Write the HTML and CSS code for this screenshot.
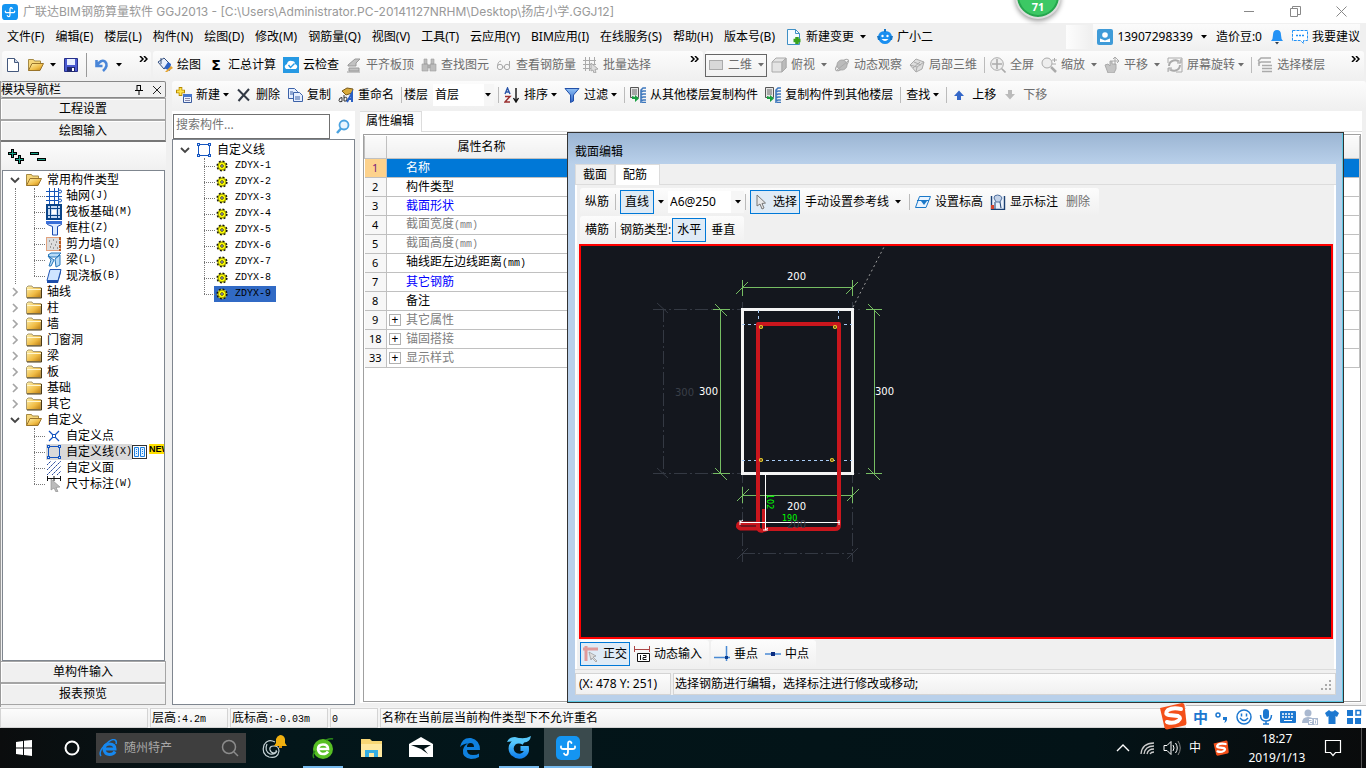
FILE: index.html
```html
<!DOCTYPE html>
<html lang="zh-CN">
<head>
<meta charset="utf-8">
<meta name="viewport" content="width=device-width, initial-scale=1">
<title>广联达BIM钢筋算量软件 GGJ2013</title>
<link rel="stylesheet" href="styles.css">
</head>
<body>
<svg class="defs" aria-hidden="true">
  <defs>
    <linearGradient id="gold" x1="0" y1="0" x2="1" y2="1"><stop offset="0" stop-color="#fff3b0"/><stop offset=".6" stop-color="#f0bc45"/><stop offset="1" stop-color="#b87a12"/></linearGradient>
    <linearGradient id="blue" x1="0" y1="0" x2="0" y2="1"><stop offset="0" stop-color="#8fc0f5"/><stop offset="1" stop-color="#2a5fc4"/></linearGradient>
    <linearGradient id="flame" x1="0" y1="0" x2="0" y2="1"><stop offset="0" stop-color="#5cd0ff"/><stop offset="1" stop-color="#1585ef"/></linearGradient>
    <symbol id="arrow" viewBox="0 0 6 4"><path d="M0 0h6L3 3.500z" fill="currentColor"/></symbol>
    <symbol id="chev" viewBox="0 0 9 6"><path d="M1 0l3 3-3 3M5 0l3 3-3 3" fill="none" stroke="#000" stroke-width="1.500"/></symbol>
    <symbol id="app" viewBox="0 0 24 24"><rect width="24" height="24" rx="5" fill="#1495f2"/><path d="M15.500 7q-1-2-2.500-1.500-1 .5-1 2V16q0 3-2 3-1.500 0-2-1.500M5 10.500q-.5 2.500 2.500 2.500h9q3 0 2.500-2.500" fill="none" stroke="#fff" stroke-width="1.800" stroke-linecap="round"/></symbol>
    <symbol id="folder" viewBox="0 0 16 16"><path d="M.5 13.500V3.500l1.500-1.500h4l1 1.500h8v10z" fill="url(#gold)" stroke="#a99a72"/><path d="M1 5.500h14" stroke="#fff6cf"/><path d="M15.500 4v10H1" fill="none" stroke="#4a3a14"/></symbol>
    <symbol id="openf" viewBox="0 0 16 16"><path d="M.5 13.500V2.500h5l1 1.500h6v2" fill="#f6d67a" stroke="#a58a45"/><path d="M.5 13.500L4 6.500h11.500l-3.500 7z" fill="url(#gold)" stroke="#9a742a"/></symbol>
    <symbol id="gear" viewBox="0 0 12 12"><circle cx="6" cy="6" r="4.800" fill="#ff0" stroke="#111" stroke-width="1.600" stroke-dasharray="1.900 1.870"/><circle cx="6" cy="6" r="3.900" fill="#ff0" stroke="#222" stroke-width=".5"/><circle cx="6" cy="6" r="1.300" fill="#dde" stroke="#111" stroke-width=".8"/></symbol>
    <symbol id="polybox" viewBox="0 0 16 16"><rect x="2.500" y="2.500" width="11" height="11" fill="none" stroke="#1555c0"/><path d="M1 1h3v3H1zM12 1h3v3h-3zM1 12h3v3H1zM12 12h3v3h-3z" fill="#1555c0"/><path d="M2 2h1v1H2zM13 2h1v1h-1zM2 13h1v1H2zM13 13h1v1h-1z" fill="#d8ecff"/></symbol>
    <symbol id="copyfl" viewBox="0 0 16 16"><path d="M.5.500h8v10h-8z" fill="#e6e6e6" stroke="#555"/><path d="M2 3h5M2 5h5M2 7h5" stroke="#666"/><path d="M16 1h-3l-2 2v13M11 5l2-1h3M11 8l2-1h3M11 11l2-1h3M11 14l2-1h3M12 15.500h4" fill="none" stroke="#3f78bd" stroke-width="1.600"/><path d="M2 9v3h3v3l4-3.500L5 8v2z" fill="#19a040"/></symbol>
    <symbol id="down" viewBox="0 0 10 10"><path d="M3 0h4v4h3L5 9.500 0 4h3z" fill="currentColor"/></symbol>
    <symbol id="caretd" viewBox="0 0 10 10"><path d="M1 3l4 4 4-4" fill="none" stroke="#444" stroke-width="1.800"/></symbol>
    <symbol id="caretr" viewBox="0 0 10 10"><path d="M3 1l4 4-4 4" fill="none" stroke="#a5a5a5" stroke-width="1.700"/></symbol>
    <symbol id="sogou" viewBox="0 0 28 28"><path d="M1 6L23 1q2 0 2.500 2l2 18q0 2-2 2.500L8 27.500q-2 0-2.500-2z" fill="#f4501a"/><path d="M22 7q-8-2-13 1-4 4 1 5l9 1q4 2 0 5-5 3-11 1" fill="none" stroke="#fff" stroke-width="4" stroke-linecap="round"/></symbol>
  </defs>
</svg>

<header class="titlebar">
  <svg class="i16"><use href="#app"/></svg>
  <h1>广联达BIM钢筋算量软件 GGJ2013 - [C:\Users\Administrator.PC-20141127NRHM\Desktop\扬店小学.GGJ12]</h1>
  <div class="winbtns">
    <button aria-label="最小化"><svg viewBox="0 0 11 11"><path d="M0 5.500h10"/></svg></button>
    <button aria-label="还原"><svg viewBox="0 0 11 11"><path d="M.5 2.500h7v8h-7zM2.500 2.500v-2h8v8h-3"/></svg></button>
    <button aria-label="关闭"><svg viewBox="0 0 11 11"><path d="M.5.500l10 10M10.500.500l-10 10"/></svg></button>
  </div>
  <div class="ball">71</div>
</header>

<nav class="menubar">
  <button>文件(F)</button><button>编辑(E)</button><button>楼层(L)</button><button>构件(N)</button><button>绘图(D)</button><button>修改(M)</button><button>钢筋量(Q)</button><button>视图(V)</button><button>工具(T)</button><button>云应用(Y)</button><button>BIM应用(I)</button><button>在线服务(S)</button><button>帮助(H)</button><button>版本号(B)</button>
  <button><svg class="i16" viewBox="0 0 16 16"><path d="M1.500.500h8l4 4v11h-12z" fill="#f4faff" stroke="#3f8fc4"/><path d="M9.500.500v4h4" fill="none" stroke="#3f8fc4"/><path d="M11 8v7M7.500 11.500h7" stroke="#39a31c" stroke-width="3.500"/></svg>新建变更<svg class="arr"><use href="#arrow"/></svg></button>
  <button><svg class="i16" viewBox="0 0 16 16"><path d="M1 9q0-7 7-7t7 7q-2 6-7 6T1 9z" fill="#1b8ff0"/><path d="M0 7h3v4H1zM13 7h3l-1 4h-2zM7 0h2v3H7z" fill="#1677c8"/><circle cx="5.500" cy="7" r="1.200" fill="#fff"/><circle cx="10.500" cy="7" r="1.200" fill="#fff"/><path d="M4.500 10q3.500 4 7 0z" fill="#fff"/></svg>广小二</button>
  <span class="ghost"></span>
  <div class="account">
    <button><svg class="i16" viewBox="0 0 16 16"><rect width="16" height="16" rx="2" fill="#3f9bd8"/><circle cx="8" cy="6" r="2.800" fill="#fff"/><path d="M3 13V9.500l5 2 5-2V13z" fill="#fff"/></svg>13907298339<svg class="arr"><use href="#arrow"/></svg></button>
    <button>造价豆:0</button>
    <button aria-label="通知"><svg class="bell" viewBox="0 0 12 16"><path d="M6 1q4 0 4 5 0 4 2 6H0q2-2 2-6 0-5 4-5z" fill="#2492f5"/><path d="M4 13h4l-2 2.500z" fill="#2b3a4a"/></svg></button>
    <button><svg class="i16" viewBox="0 0 16 16"><path d="M.5 1.500h15v10h-4v3l-3-3h-8z" fill="#fff" stroke="#2492f5" stroke-dasharray="3 1"/><path d="M4 6.500h2M7 6.500h2M10 6.500h2" stroke="#2492f5" stroke-width="1.500"/></svg>我要建议</button>
  </div>
</nav>

<div class="toolrow">
  <div class="bar filebar">
    <button aria-label="新建"><svg class="i16" viewBox="0 0 16 16"><path d="M2.500 1.500h7l4 4v9h-11z" fill="#fff" stroke="#44587c"/><path d="M9.500 1.500v4h4" fill="#c9d6ea" stroke="#44587c"/></svg></button>
    <button aria-label="打开"><svg class="i16"><use href="#openf"/></svg><svg class="arr"><use href="#arrow"/></svg></button>
    <button aria-label="保存"><svg class="i16" viewBox="0 0 16 16"><path d="M1.500 1.500h13v13h-13z" fill="#4a5ad0" stroke="#27308a"/><path d="M4 2h8v6H4z" fill="#e8efff"/><path d="M4 10h8v5H4z" fill="#20286e"/><path d="M9 11h2v3H9z" fill="#fff"/></svg></button>
    <i class="sep tall"></i>
    <button aria-label="撤销"><svg class="i16" viewBox="0 0 16 16"><path d="M2.500 3v6h6M3 8.500Q7 2 11 4.500q4 4-2 9.500" fill="none" stroke="#4a86d8" stroke-width="2.600"/></svg><svg class="arr"><use href="#arrow"/></svg></button>
    <svg class="more"><use href="#chev"/></svg>
  </div>
  <div class="bar drawbar">
    <button><svg class="i16" viewBox="0 0 16 16"><path d="M1 5l6-4 6 6-6 5z" fill="#e8eefb" stroke="#35507f"/><path d="M4 1v6" stroke="#35507f"/><path d="M7 11l4-6 3 2q-1 6-1 7z" fill="#2d62c4"/><path d="M8 15l6-6 2 2-6 4z" fill="#e6a32e"/></svg>绘图</button>
    <button><b class="sigma">Σ</b>汇总计算</button>
    <button><svg class="i16" viewBox="0 0 16 16"><rect width="16" height="16" fill="#2699e3"/><path d="M3 12q-3-3 1-5 1-4 5-3 3 0 3 3 4 2 1 5z" fill="#fff"/><path d="M5.500 8l2 2.500 4-4" fill="none" stroke="#2699e3" stroke-width="1.400"/></svg>云检查</button>
    <button disabled><svg class="i16" viewBox="0 0 16 16"><path d="M2 8l7-6h5l-4 4v3H2zM3 11h10v3H3z" fill="#c2c2c2" stroke="#999"/><path d="M1 15h13" stroke="#999"/></svg>平齐板顶</button>
    <button disabled><svg class="i16" viewBox="0 0 16 16"><path d="M3 2h3v5H3zM10 2h3v5h-3zM1 7h6v7H1zM9 7h6v7H9zM7 8h2v3H7z" fill="#bdbdbd" stroke="#a0a0a0" stroke-width=".6"/></svg>查找图元</button>
    <button disabled><svg class="i16" viewBox="0 0 16 16"><circle cx="4" cy="10" r="2.700"/><circle cx="11" cy="10" r="2.700"/><path d="M1.500 9Q2 4 5 4M13.500 10V4M7 10h2"/></svg>查看钢筋量</button>
    <button disabled><svg class="i16" viewBox="0 0 16 16"><path d="M0 3.500h13M0 7.500h13M0 11.500h8M2.500 0v14M6.500 0v14M11.500 0v8"/><path d="M8 6l7 6-3 .5 1 3-2 .5-1-3-2 1z" fill="#ddd"/></svg>批量选择</button>
    <svg class="more"><use href="#chev"/></svg>
  </div>
  <div class="bar viewbar">
    <button class="framed" disabled><svg class="i16" viewBox="0 0 16 16"><rect x="1.500" y="3.500" width="13" height="9" fill="#d8d8d8"/></svg>二维<svg class="arr"><use href="#arrow"/></svg></button>
    <button disabled><svg class="i16" viewBox="0 0 16 16"><path d="M1 5l4-4h10v10l-4 4H1z" fill="#e4e4e4"/><path d="M1 5h10v10M11 5l4-4" /><path d="M11 5l4-4v10l-4 4z" fill="#bbb"/></svg>俯视<svg class="arr"><use href="#arrow"/></svg></button>
    <button disabled><svg class="i16" viewBox="0 0 16 16"><ellipse cx="8" cy="8" rx="8" ry="3" transform="rotate(-40 8 8)"/><circle cx="8" cy="8" r="5" fill="#bbb"/><path d="M3 13L14 4"/></svg>动态观察</button>
    <button disabled><svg class="i16" viewBox="0 0 16 16"><path d="M1 8l6-6 8 3-2 7-6 3z" fill="#ddd"/><path d="M1 8l7 2 7-5M8 10l-1 5M5 5l7 3M4 11l7-6"/></svg>局部三维</button>
    <i class="sep"></i>
    <button disabled><svg class="i16" viewBox="0 0 16 16"><circle cx="7" cy="7" r="6.300" fill="#eee"/><path d="M7 2v10M2 7h10M11.500 11.500l4 4" stroke-width="1.600"/></svg>全屏</button>
    <button disabled><svg class="i16" viewBox="0 0 16 16"><circle cx="6" cy="6" r="5" fill="#eee"/><path d="M10 10l5 5" stroke-width="2.500"/><path d="M11 3h5M13.500 1v4M11 7h4"/></svg>缩放<svg class="arr"><use href="#arrow"/></svg></button>
    <button disabled><svg class="i16" viewBox="0 0 16 16"><path d="M1 8l3-1 2 2V4h2v3h4v5l-2 4H4z" fill="#c4c4c4"/><path d="M11 0v8M8 4h7M9 2l2-2 2 2M13 2l2 2-2 2"/></svg>平移<svg class="arr"><use href="#arrow"/></svg></button>
    <button disabled><svg class="i16" viewBox="0 0 16 16"><path d="M1 6V1h14v14H9" /><path d="M2 9a6 6 0 0 1 11-3M13 8a6 6 0 0 1-11 3" stroke-width="2"/><path d="M10 6h4V2M5 11H1v4" fill="#ccc"/></svg>屏幕旋转<svg class="arr near"><use href="#arrow"/></svg></button>
    <i class="sep"></i>
    <button disabled><svg class="i16" viewBox="0 0 16 16"><path d="M1 4l3-3h10M1 7l3-2h10M5 8.500h10M5 11.500h10M5 14.500h10M2 4v5" stroke-width="1.500"/></svg>选择楼层</button>
    <svg class="more"><use href="#chev"/></svg>
  </div>
</div>

<main class="work">
  <aside class="nav">
    <div class="navhead"><span>模块导航栏</span><button aria-label="固定"><svg viewBox="0 0 10 10"><path d="M3 0v5M6.500 0v5M3 .5h4M1 5.500h8M5 6v4" fill="none" stroke="#000"/></svg></button><button aria-label="关闭面板"><svg viewBox="0 0 10 10"><path d="M1 1l8 8M9 1L1 9" stroke="#222"/></svg></button></div>
    <button class="wide">工程设置</button>
    <button class="wide pressed">绘图输入</button>
    <div class="mini"><button aria-label="全部展开"><svg viewBox="0 0 18 16"><path d="M5.500 1v9M1 5.500h9M12.500 7v9M8 11.500h9" stroke="#000" stroke-width="3"/><path d="M5.500 2v7M2 5.500h7M12.500 8v7M9 11.500h7" stroke="#16a085"/></svg></button><button aria-label="全部折叠"><svg viewBox="0 0 18 16"><path d="M1 5.500h9M8 11.500h9" stroke="#000" stroke-width="3"/><path d="M2 5.500h7M9 11.500h7" stroke="#16a085"/></svg></button></div>
    <div class="treebox">
      <ul class="tree">
        <li><div class="node"><svg class="car"><use href="#caretd"/></svg><svg class="i16"><use href="#openf"/></svg>常用构件类型</div>
          <ul class="sub">
            <li><svg class="i16" viewBox="0 0 16 16"><path d="M0 3.500h16M0 8.500h16M0 12.500h16M3.500 0v16M8.500 0v16M12.500 0v16" stroke="#1555b8"/><circle cx="14" cy="3.500" r="1.500" fill="#fff" stroke="#1555b8"/><circle cx="14" cy="12.500" r="1.500" fill="#fff" stroke="#1555b8"/></svg>轴网<tt>(J)</tt></li>
            <li><svg class="i16" viewBox="0 0 16 16"><rect x="1" y="1" width="14" height="14" fill="#c8dcf4" stroke="#0a4488" stroke-width="2"/><path d="M4.500 2v12M11.500 2v12M2 4.500h12M2 11.500h12" stroke="#0a4488"/><path d="M6 6h4v4H6z" fill="#fff"/></svg>筏板基础<tt>(M)</tt></li>
            <li><svg class="i16" viewBox="0 0 16 16"><path d="M.5 1.500h15v3l-4 2v8.500h-5V6.500l-5-2z" fill="#dceaff" stroke="#1848b0"/><path d="M0 1h16v3H0z" fill="#3a6fd8"/></svg>框柱<tt>(Z)</tt></li>
            <li><svg class="i16" viewBox="0 0 16 16"><rect x=".5" y="1.500" width="14" height="13" fill="#ddd" stroke="#e2a27e"/><path d="M3 5h1M7 4h1M10 6h1M5 8h1M9 9h1M4 11h1M7 12h1M11 12h1" stroke="#555"/><path d="M14 1v14" stroke="#b75b22" stroke-width="2" stroke-dasharray="3 1"/></svg>剪力墙<tt>(Q)</tt></li>
            <li><svg class="i16" viewBox="0 0 16 16"><path d="M2 3l3-2h10l-4 4H4zM9 7l5-4v10l-4 2zM2 4l6 4-3 6H3l2-6z" fill="#b8dcf8" stroke="#2475b8"/></svg>梁<tt>(L)</tt></li>
            <li><svg class="i16" viewBox="0 0 16 16"><path d="M4 1.500h11l-3 11H1z" fill="#cfe4ff" stroke="#2257b4"/><path d="M1 12.500h11l3-11v3l-3 10.500H1z" fill="#1c4da8"/></svg>现浇板<tt>(B)</tt></li>
          </ul></li>
        <li><div class="node"><svg class="car"><use href="#caretr"/></svg><svg class="i16"><use href="#folder"/></svg>轴线</div></li>
        <li><div class="node"><svg class="car"><use href="#caretr"/></svg><svg class="i16"><use href="#folder"/></svg>柱</div></li>
        <li><div class="node"><svg class="car"><use href="#caretr"/></svg><svg class="i16"><use href="#folder"/></svg>墙</div></li>
        <li><div class="node"><svg class="car"><use href="#caretr"/></svg><svg class="i16"><use href="#folder"/></svg>门窗洞</div></li>
        <li><div class="node"><svg class="car"><use href="#caretr"/></svg><svg class="i16"><use href="#folder"/></svg>梁</div></li>
        <li><div class="node"><svg class="car"><use href="#caretr"/></svg><svg class="i16"><use href="#folder"/></svg>板</div></li>
        <li><div class="node"><svg class="car"><use href="#caretr"/></svg><svg class="i16"><use href="#folder"/></svg>基础</div></li>
        <li><div class="node"><svg class="car"><use href="#caretr"/></svg><svg class="i16"><use href="#folder"/></svg>其它</div></li>
        <li><div class="node"><svg class="car"><use href="#caretd"/></svg><svg class="i16"><use href="#openf"/></svg>自定义</div>
          <ul class="sub last">
            <li><svg class="i16" viewBox="0 0 16 16"><path d="M3 3l10 10M13 3L3 13" stroke="#1555c0" stroke-width="1.200"/><rect x="6.500" y="6.500" width="3" height="3" fill="#fff" stroke="#1555c0"/></svg>自定义点</li>
            <li><span class="hot"><svg class="i16"><use href="#polybox"/></svg>自定义线<tt>(X)</tt></span><svg class="i16" viewBox="0 0 16 16"><rect x=".5" y="1.500" width="14" height="13" fill="#fff" stroke="#333"/><path d="M2.500 3.500h4v9h-4zM8.500 3.500h4v9h-4z" fill="#e4f2ff" stroke="#1d7fe0"/><path d="M4.500 5v6M10.500 5v6" stroke="#1d7fe0" stroke-dasharray="1 1"/></svg><b class="new">NEW</b></li>
            <li><svg class="i16" viewBox="0 0 16 16"><path d="M1 5l4-4M1 10l9-9M1 15L15 1M6 15l9-9M11 15l4-4" stroke="#26489c" stroke-dasharray="2 .5"/></svg>自定义面</li>
            <li><svg class="i16" viewBox="0 0 16 16"><path d="M1.500 0v5M14.500 0v5M1 2.500h14M8 0v5" stroke="#111"/><path d="M5 3l9 8-4 .5 2 4-2 .5-2-4-3 2z" fill="#bbb" stroke="#888" stroke-width=".6"/></svg>尺寸标注<tt>(W)</tt></li>
          </ul></li>
      </ul>
    </div>
    <button class="wide">单构件输入</button>
    <button class="wide">报表预览</button>
  </aside>

  <section class="content">
    <div class="bar compbar">
      <button><svg class="i16" viewBox="0 0 16 16"><path d="M4.500 0v9M0 4.500h9" stroke="#b58800" stroke-width="3.600"/><path d="M4.500 1v7M1 4.500h7" stroke="#ffe34a" stroke-width="2"/><path d="M7.500 7.500h8v8h-8z" fill="#eaf2ff" stroke="#3c5b9c"/><path d="M7 7h9v3H7z" fill="#4676cf"/><path d="M9 11.500h5M9 13.500h5" stroke="#88a"/></svg>新建<svg class="arr near"><use href="#arrow"/></svg></button>
      <button><svg class="i16" viewBox="0 0 16 16"><path d="M2 2.500l11 11M13 2L2.500 14" stroke="#333a45" stroke-width="2"/></svg>删除</button>
      <button><svg class="i16" viewBox="0 0 16 16"><path d="M1.500 1.500h6l3 3v7h-9z" fill="#e5eeff" stroke="#3c62a8"/><path d="M6.500 5.500h6l3 3v6h-9z" fill="#e5eeff" stroke="#3c62a8"/><path d="M3 5h3M3 7h3M8 10h5M8 12h5" stroke="#3c62a8"/></svg>复制</button>
      <button><svg class="i16" viewBox="0 0 16 16"><path d="M4 4l5-3 6 1-1 4-6 2z" fill="#d9aa3a" stroke="#78591c"/><path d="M1 13.500q0-3 3-3v4q-3 1-3-1M6 8v6q3 1 3-2t-3-1" fill="none" stroke="#333"/><path d="M9 15l5-9v9M11 12h3" fill="none" stroke="#2a5fc4" stroke-width="2"/></svg>重命名</button>
      <i class="sep"></i>
      <label for="floor">楼层</label>
      <span class="combo floor"><select id="floor"><option>首层</option></select><svg class="arr"><use href="#arrow"/></svg></span>
      <i class="sep"></i>
      <button><svg class="i16" viewBox="0 0 16 16"><path d="M1 7l2.500-6L6 7M2 5h3" fill="none" stroke="#2a55a8" stroke-width="1.400"/><path d="M1 9.500h5l-5 5.500h5" fill="none" stroke="#9a2f2f" stroke-width="1.500"/><path d="M12 1v13M9.500 11l2.500 4 2.500-4" fill="none" stroke="#111" stroke-width="1.400"/></svg>排序<svg class="arr near"><use href="#arrow"/></svg></button>
      <button><svg class="i16" viewBox="0 0 16 16"><path d="M1 1.500h14L9.500 8v6l-3 1.500V8z" fill="url(#blue)" stroke="#2250a8"/></svg>过滤<svg class="arr near"><use href="#arrow"/></svg></button>
      <i class="sep"></i>
      <button><svg class="i16"><use href="#copyfl"/></svg>从其他楼层复制构件</button>
      <button><svg class="i16"><use href="#copyfl"/></svg>复制构件到其他楼层</button>
      <i class="sep"></i>
      <button>查找<svg class="arr near"><use href="#arrow"/></svg></button>
      <i class="sep"></i>
      <button class="up"><svg class="i10"><use href="#down"/></svg>上移</button>
      <button class="dn" disabled><svg class="i10"><use href="#down"/></svg>下移</button>
    </div>

    <div class="panes">
      <section class="complist">
        <div class="search"><input type="text" placeholder="搜索构件..." aria-label="搜索构件"><button aria-label="搜索"><svg viewBox="0 0 16 16"><circle cx="9" cy="6" r="4.500" fill="#eaf6ff" stroke="#4ba3e0" stroke-width="1.800"/><path d="M6 9.500L2 14" stroke="#4ba3e0" stroke-width="2.500"/></svg></button></div>
        <div class="treebox">
          <ul class="tree">
            <li><div class="node"><svg class="car"><use href="#caretd"/></svg><svg class="i16"><use href="#polybox"/></svg>自定义线</div>
              <ul class="sub">
                <li><svg class="i12"><use href="#gear"/></svg><tt>ZDYX-1</tt></li><li><svg class="i12"><use href="#gear"/></svg><tt>ZDYX-2</tt></li><li><svg class="i12"><use href="#gear"/></svg><tt>ZDYX-3</tt></li><li><svg class="i12"><use href="#gear"/></svg><tt>ZDYX-4</tt></li><li><svg class="i12"><use href="#gear"/></svg><tt>ZDYX-5</tt></li><li><svg class="i12"><use href="#gear"/></svg><tt>ZDYX-6</tt></li><li><svg class="i12"><use href="#gear"/></svg><tt>ZDYX-7</tt></li><li><svg class="i12"><use href="#gear"/></svg><tt>ZDYX-8</tt></li><li class="sel"><svg class="i12"><use href="#gear"/></svg><tt>ZDYX-9</tt></li>
              </ul></li>
          </ul>
        </div>
      </section>

      <section class="props">
        <div class="tabs"><button class="on">属性编辑</button></div>
        <div class="sheet">
          <table>
            <thead><tr><th class="num"></th><th class="name">属性名称</th><th></th></tr></thead>
            <tbody>
              <tr class="cur"><td>1</td><td>名称</td><td></td></tr>
              <tr><td>2</td><td>构件类型</td><td></td></tr>
              <tr class="link"><td>3</td><td>截面形状</td><td></td></tr>
              <tr class="dim"><td>4</td><td>截面宽度<tt>(mm)</tt></td><td></td></tr>
              <tr class="dim"><td>5</td><td>截面高度<tt>(mm)</tt></td><td></td></tr>
              <tr><td>6</td><td>轴线距左边线距离<tt>(mm)</tt></td><td></td></tr>
              <tr class="link"><td>7</td><td>其它钢筋</td><td></td></tr>
              <tr><td>8</td><td>备注</td><td></td></tr>
              <tr class="dim grp"><td>9</td><td><button aria-label="展开">+</button>其它属性</td><td></td></tr>
              <tr class="dim grp"><td>18</td><td><button aria-label="展开">+</button>锚固搭接</td><td></td></tr>
              <tr class="dim grp"><td>33</td><td><button aria-label="展开">+</button>显示样式</td><td></td></tr>
            </tbody>
          </table>
        </div>
      </section>
    </div>
  </section>

  <section class="dialog" role="dialog" aria-label="截面编辑">
    <h2>截面编辑</h2>
    <div class="dbody">
      <div class="tabs"><button>截面</button><button class="on">配筋</button></div>
      <div class="dpanel">
        <div class="bar">
          <span class="lbl">纵筋</span><i class="sep"></i>
          <button class="checked">直线</button><svg class="arr line"><use href="#arrow"/></svg>
          <span class="combo rebar"><select aria-label="纵筋规格"><option>A6@250</option></select><svg class="arr"><use href="#arrow"/></svg></span>
          <i class="sep"></i>
          <button class="checked icon"><svg class="i16" viewBox="0 0 16 16"><path d="M4 1v11l3-2 2 5 2-1-2-4.500 3.500-.5z" fill="#e8e8e8" stroke="#777"/></svg>选择</button>
          <button>手动设置参考线<svg class="arr"><use href="#arrow"/></svg></button>
          <i class="sep"></i>
          <button class="icon"><svg class="i16" viewBox="0 0 16 16"><path d="M4.500 2.500h11L11 13.500H.5z" fill="#eaf4ff" stroke="#1a78c8"/><path d="M2 6.500h12" stroke="#1a78c8"/><path d="M6 7h6l-3 4z" fill="#1a78c8"/></svg>设置标高</button>
          <button class="icon"><svg class="i16" viewBox="0 0 16 16"><path d="M1.500 2v13.500h13V2" fill="#e9f0fa" stroke="#1b3f70" stroke-width="1.400"/><path d="M4 4q0-3 3.500-3T12 4l-2 4H6z" fill="#c3d2e8" stroke="#51709e"/><path d="M5 8v7M10 8l1 6" stroke="#1b3f70"/><path d="M1 11h3v4H1z" fill="#d8442c"/></svg>显示标注</button>
          <button disabled>删除</button>
        </div>
        <div class="bar">
          <span class="lbl">横筋</span><i class="sep"></i><span>钢筋类型:</span>
          <button class="checked">水平</button><button>垂直</button>
        </div>
        <div class="canvas">
          <svg role="img" aria-label="截面图"><g transform="translate(-581 -246)" fill="none">
            <g stroke="#343943" stroke-dasharray="13 3 2 3"><path d="M653 309.500h207M653 473.500h207M663.500 309v164M742.500 302v260M852.500 302v260M742 553.500h110"/><path d="M657 303l11 10M657 468l11 10M737 559l11-11M847 559l11-11" stroke-dasharray="none"/></g>
            <path d="M853 307l31-60" stroke="#9b9b9b" stroke-dasharray="2 3"/>
            <g stroke="#76bd63"><path d="M742.500 280v16M852.500 280v16M742 287.500h110M736 294l12-12M846 294l12-12M720.500 309v165M713 309.500h17M713 473.500h17M715 304l12 12M715 468l12 12M874.500 309v165M866 309.500h16M866 473.500h16M868 304l12 12M868 468l12 12M742.500 487v16M852.500 487v16M742 495.500h110M737 501l12-12M847 501l12-12"/></g>
            <rect x="742.500" y="309.500" width="110" height="164" stroke="#f4f4f4" stroke-width="3"/>
            <path d="M742 324.500h110M758.500 310v14M838.500 310v14M742 460.500h110" stroke="#a8cbf5" stroke-dasharray="3 3"/>
            <path d="M764 530v-21M758 523v5q2 4 6 2l3-1h68q4 0 4-4v-3M760 523.500h-20q-2 0-2 3 1 2 4 2h16" stroke="#ca161d" stroke-width="4" stroke-linejoin="round"/>
            <path d="M758 524V324h81v200" stroke="#ca161d" stroke-width="4" stroke-linejoin="round"/>
            <path d="M765.500 474v56M740 522.500h100M763 474h5M763 530h5M740 520v5M839 520v5M765 530l3-2M740 522l3-2" stroke="#fff"/>
            <g stroke="#ead62b" stroke-width="1.200" fill="#5c2813"><circle cx="761" cy="327" r="1.500"/><circle cx="835" cy="327" r="1.500"/><circle cx="761" cy="460" r="1.500"/><circle cx="832" cy="460" r="1.500"/></g>
            <g class="dims"><text x="787" y="280">200</text><text x="699" y="395">300</text><text x="875" y="395">300</text><text x="787" y="510">200</text><text class="faint" x="675" y="396">300</text><text class="faint" x="787" y="528">200</text><text class="grn" x="782" y="521">190</text><text class="grn" transform="translate(767 494) rotate(90)">102</text></g>
          </g></svg>
        </div>
        <div class="snap">
          <div class="bar"><button class="checked icon"><svg class="i16" viewBox="0 0 16 16"><path d="M0 3h15M3 0v15" stroke="#e09a9a" stroke-width="3"/><path d="M6 6l7 4-3 1 4 4-1 1-4-4-1 2z" fill="#ddd" stroke="#888" stroke-width=".6"/></svg>正交</button><button class="icon"><svg class="i16" viewBox="0 0 16 16"><path d="M.5 0v6M15.500 0v6M0 3.500h16" stroke="#a44"/><path d="M3.500 7.500h12v8h-12z" fill="#fff" stroke="#111"/><path d="M6.500 9v5M9 9.500h3v2H9v2h3.500" fill="none" stroke="#111"/></svg>动态输入</button></div>
          <div class="bar"><button class="icon"><svg class="i16" viewBox="0 0 16 16"><path d="M0 11.500h16M12.500 0v15" stroke="#4a8ad4" stroke-width="1.500"/><path d="M11 10h3v3h-3z" fill="#0a3c90"/></svg>垂点</button><button class="icon"><svg class="i16" viewBox="0 0 16 16"><path d="M0 8h16" stroke="#4a8ad4" stroke-width="1.500"/><path d="M6 6h4v4H6z" fill="#0a2c80"/></svg>中点</button></div>
        </div>
      </div>
      <div class="dstatus"><span class="xy">(X: 478 Y: 251)</span><span class="grow">选择钢筋进行编辑，选择标注进行修改或移动;<svg viewBox="0 0 12 12"><path d="M8 0h2v2H8zM4 4h2v2H4zM8 4h2v2H8zM0 8h2v2H0zM4 8h2v2H4zM8 8h2v2H8z" fill="#aaa"/></svg></span></div>
    </div>
  </section>
</main>

<footer class="status"><span class="s1"></span><span class="s2">层高<tt>:4.2m</tt></span><span class="s3">底标高<tt>:-0.03m</tt></span><span class="s4"><tt>0</tt></span><span class="grow">名称在当前层当前构件类型下不允许重名</span>
  <div class="ime"><svg class="logo"><use href="#sogou"/></svg><b>中</b>
    <svg viewBox="0 0 16 16"><circle cx="4" cy="6" r="2" fill="none" stroke="#1d78d0" stroke-width="1.500"/><path d="M9 8h4v3q-1 3-3 3 1-1 1-3H9z" fill="#1d78d0"/></svg>
    <svg viewBox="0 0 16 16"><circle cx="8" cy="8" r="7" fill="none" stroke="#1d78d0" stroke-width="1.500"/><path d="M5.500 4.500v3M10.500 4.500v3M4 9q4 5 8 0" fill="none" stroke="#1d78d0" stroke-width="1.500"/></svg>
    <svg viewBox="0 0 16 16"><rect x="5" y="0" width="6" height="10" rx="3" fill="#1d78d0"/><path d="M2.500 6q0 6 5.500 6t5.500-6M8 12v3M5 15h6" fill="none" stroke="#1d78d0" stroke-width="1.500"/></svg>
    <svg viewBox="0 0 16 16"><rect y="2" width="16" height="12" rx="1" fill="#1d78d0"/><path d="M2 5h12M2 8h12" stroke="#fff" stroke-width="1.500" stroke-dasharray="2 1"/><path d="M4 11.500h8" stroke="#fff"/></svg>
    <svg viewBox="0 0 16 16"><circle cx="6" cy="4" r="3.500" fill="#a9b8cf"/><path d="M0 14q0-6 6-6 4 0 5 2v4z" fill="#a9b8cf"/><path d="M6 9h10v7H6z" fill="#a9b8cf"/><path d="M7 10.500h3v2H7.500v2H10M12.500 10v5h2v-4h-2" stroke="#fff" fill="none"/></svg>
    <svg viewBox="0 0 16 16"><path d="M1 4l4-3q3 3 6 0l4 3-2 4-1.500-1v8h-7V7L3 8z" fill="#1d78d0"/></svg>
    <svg viewBox="0 0 16 16"><path d="M1 1h6v6H1zM1 9h6v6H1zM9 9h6v6H9z" fill="#1d78d0"/><rect x="10" y="1.500" width="4.500" height="4.500" fill="none" stroke="#1d78d0" stroke-width="1.500"/></svg>
  </div>
</footer>

<nav class="taskbar" aria-label="任务栏">
  <button class="t" aria-label="开始"><svg class="i16" viewBox="0 0 16 16"><path d="M0 2l7-1v6.500H0zM8 .8L16 0v7.500H8zM0 8.500h7V15l-7-1zM8 8.500h8V16l-8-1z" fill="#fff"/></svg></button>
  <button class="t" aria-label="Cortana"><svg class="i16" viewBox="0 0 16 16"><circle cx="8" cy="8" r="6.500" fill="none" stroke="#fff" stroke-width="2"/></svg></button>
  <div class="tsearch"><svg class="i18" viewBox="0 0 18 18"><path d="M5 10h11q0-5-5.500-5Q5 5 5 10.500q1 5 5.500 5 4 0 5.500-3" fill="none" stroke="#1688f0" stroke-width="3"/><path d="M2 17Q-1 13 6 6t10-5q2 1 1 4" fill="none" stroke="#1688f0" stroke-width="1.500"/></svg><input type="text" value="随州特产" aria-label="搜索"><svg class="i18" viewBox="0 0 18 18"><circle cx="8" cy="8" r="6.500" fill="none" stroke="#8c8c8c" stroke-width="1.500"/><path d="M13 13l4 4" stroke="#8c8c8c" stroke-width="1.500"/></svg></div>
  <div class="apps">
    <button class="t" aria-label="助手"><svg class="i28" viewBox="0 0 28 28"><path d="M15 8Q8 4 4 11q-3 9 5 12 9 2 10-6 0-5-5-5-5 0-4 4 1 3 4 3 3-1 2-3M7 10q-3 7 3 10 5 1 7-3" fill="none" stroke="#c6d3d6" stroke-width="1.200"/><path d="M14 12l2-3V5q1-3 4-4 4 0 5 4v4l2 3z" fill="#f0b010"/><path d="M19 12h3v2h-3z" fill="#e09000"/></svg></button>
    <button class="t run" aria-label="浏览器"><svg class="i22" viewBox="0 0 22 22"><circle cx="11" cy="12" r="10" fill="#58bf24"/><path d="M6 12h10q0-4.500-5-4.500T6 12.500Q7 17 11 17q3.500 0 5-2.500" fill="none" stroke="#fff" stroke-width="2.600"/><path d="M2 21Q0 18 3 14M14 3q5-2 7-1" fill="none" stroke="#2b8a19" stroke-width="1.500"/></svg></button>
    <button class="t" aria-label="文件资源管理器"><svg class="i22" viewBox="0 0 22 22"><path d="M0 2h9l2 2h10v16H0z" fill="#f8d775"/><path d="M0 7h21v13H0z" fill="#ffe9a0"/><path d="M4 20v-7h13v7h-4v-4H8v4z" fill="#35aee2"/></svg></button>
    <button class="t" aria-label="邮件"><svg class="i24" viewBox="0 0 24 24"><path d="M0 8l12-7 12 7v13H0z" fill="#fff"/><path d="M2 9h20l-7 4 4 5-7-5z" fill="#031317"/></svg></button>
    <button class="t" aria-label="Edge"><svg class="i22" viewBox="0 0 22 22"><path d="M1 10Q3 0 12 1q9 2 9 12H8q0 5 6 5 4 0 6-1.500V20q-3 2-8 2Q3 21 4 13 5 8 9 6.500 4 6.500 1 10zM8 10h7q0-4-3.500-4T8 10z" fill="#0f80de" fill-rule="evenodd"/></svg></button>
    <button class="t run" aria-label="广联达G"><svg class="i24" viewBox="0 0 24 24"><path d="M17 6.500Q11 3 6.500 7 2 12 6 17.500q5 4.500 10.500 1.500 3.500-2.500 3-6.500h-6" fill="none" stroke="url(#flame)" stroke-width="5"/><path d="M24 0q-1 6-7 6.500L10 6Q4 5 0 6 2 1 8 1q9 3 16-1z" fill="#58c8fb"/></svg></button>
    <button class="t run act" aria-label="广联达BIM"><svg class="i24"><use href="#app"/></svg></button>
  </div>
  <div class="tray">
    <svg class="i16" viewBox="0 0 16 16"><path d="M2 11l6-6 6 6" fill="none" stroke="#fff" stroke-width="1.400"/></svg>
    <svg class="i16" viewBox="0 0 16 16"><path d="M2 14Q3 3 15 3M5 14q1-8 10-8M8 14q1-5 7-5M11 14q1-2 4-2" fill="none" stroke="#ccc" stroke-width="1.300"/></svg>
    <svg class="i18" viewBox="0 0 18 18"><path d="M1 6.500h3l4-4v13l-4-4H1z" fill="none" stroke="#fff"/><path d="M10 6q2 3 0 6M12.500 4q3.500 5 0 10" fill="none" stroke="#fff"/><path d="M15 2q4.500 7 0 14" fill="none" stroke="#888"/></svg>
    <span>中</span><svg class="i16"><use href="#sogou"/></svg>
    <time>18:27<br>2019/1/13</time>
    <svg class="i18" viewBox="0 0 18 18"><path d="M1.500 1.500h15v12h-5l-2.500 3-2.500-3h-5z" fill="none" stroke="#fff" stroke-width="1.200"/></svg>
    <i class="peek"></i>
  </div>
</nav>
</body>
</html>
```
FILE: styles.css
```css
* { box-sizing: border-box; }
body {
  margin: 0; height: 100vh; overflow: hidden; display: flex; flex-direction: column;
  background: #f0f0f0; color: #000;
  font: 12px/16px "Noto Sans", "Noto Sans CJK SC", sans-serif;
}
button, input, select { font: inherit; color: inherit; border: 0; background: none; padding: 0; margin: 0; border-radius: 0; }
button { display: inline-flex; align-items: center; white-space: nowrap; }
svg { display: block; flex: none; }
ul { list-style: none; margin: 0; padding: 0; }
h1, h2 { margin: 0; font-weight: 400; font-size: 12px; }
tt { font: 10px/16px "Liberation Mono", monospace; }
.defs { position: absolute; width: 0; height: 0; }
.i10 { width: 10px; height: 10px; }
.i12 { width: 12px; height: 12px; }
.i16 { width: 16px; height: 16px; }
.i18 { width: 18px; height: 18px; }
.i22 { width: 22px; height: 22px; }
.i24 { width: 24px; height: 24px; }
.i28 { width: 28px; height: 28px; }
.arr { width: 6px; height: 4px; margin-left: 2px; }
.arr.near { margin-left: -1px; }
.grow { flex: 1; }

.titlebar { position: relative; flex: none; height: 23px; display: flex; align-items: center; gap: 5px; padding-left: 2px; background: #fff; color: #999; }
.titlebar h1 { flex: 1; white-space: nowrap; font-family: Inter, "Noto Sans CJK SC", sans-serif; }
.winbtns { display: flex; }
.winbtns button { width: 46px; height: 22px; justify-content: center; padding-right: 4px; }
.winbtns svg { width: 11px; height: 11px; fill: none; stroke: #888; }
.ball { position: absolute; z-index: 5; right: 305px; top: -27px; width: 46px; height: 46px; border-radius: 50%; border: 2px solid #ddd; background: #3cc864; box-shadow: inset 0 0 0 2px #25a54d, 0 2px 5px #0006; color: #fff; font-weight: 700; font-size: 11px; line-height: 16px; text-align: center; padding-top: 24px; }

.menubar { flex: none; height: 28px; display: flex; align-items: center; padding: 0 6px 0 7px; gap: 11px; }
.menubar button { gap: 4px; }
.ghost { flex: none; width: 24px; height: 24px; margin-left: auto; background: linear-gradient(90deg, #fdfdfd, #f0f0f0); }
.account { display: flex; align-items: center; gap: 9px; height: 26px; padding-left: 4px; margin-left: -8px; background: linear-gradient(#fbfbfb, #f0f0f0); }
.account .arr { margin-left: 4px; }
.bell { width: 12px; height: 16px; }

.toolrow { flex: none; height: 28px; display: flex; gap: 2px; margin: 0 2px; }
.bar { display: flex; align-items: center; gap: 8px; height: 28px; padding: 0 4px; background: linear-gradient(#fcfcfc, #f0f0f0); border-radius: 3px; }
.bar button { gap: 4px; }
.bar button:disabled { color: #6d6d6d; }
.toolrow button:disabled .i16 { fill: none; stroke: #aaa; }
.sep { width: 1px; height: 16px; background: #bbb; flex: none; }
.sep.tall { height: 24px; background: #999; }
.more { width: 9px; height: 6px; margin: 0 0 12px auto; }
.filebar { flex: 0 0 149px; gap: 7px; padding: 0 3px; }
.drawbar { flex: 0 0 550px; gap: 7px; }
.viewbar { flex: 1; gap: 7px; padding: 0 4px 0 0; }
.viewbar .sep { margin: 0 -2px 0 0; }
.viewbar .framed { border: 1px solid #666; height: 23px; padding: 0 2px; margin-right: -3px; }
.sigma { width: 16px; font: bold 14px/16px "DejaVu Sans", sans-serif; text-align: center; }

.work { position: relative; flex: 1; min-height: 0; display: flex; gap: 6px; padding-top: 2px; }
.nav { flex: 0 0 166px; min-width: 0; display: flex; flex-direction: column; border-left: 1px solid #999; padding-bottom: 2px; }
.navhead { display: flex; align-items: center; height: 17px; border: 1px solid #888; border-left: 0; border-radius: 2px; gap: 8px; padding-right: 3px; }
.navhead span { flex: 1; }
.navhead svg { width: 10px; height: 10px; }
.wide { flex: none; height: 22px; justify-content: center; border: 1px solid #a5a5a5; border-width: 1px 1px 1px 0; background: #f0f0f0; box-shadow: inset 1px 1px #fff; }
.wide.pressed { border-bottom: 2px solid #777; }
.mini { height: 28px; display: flex; align-items: center; gap: 4px; padding-left: 6px; background: linear-gradient(#fcfcfc, #f0f0f0); }
.mini svg { width: 18px; height: 16px; }
.treebox { flex: 1; min-height: 0; background: #fff; border: 1px solid #7f868f; overflow: hidden; }
.nav .treebox { margin: 0 1px; padding-top: 1px; }
.node { height: 16px; display: flex; align-items: center; gap: 5px; padding-left: 7px; white-space: nowrap; }
.car { width: 10px; height: 10px; }
.node .car { margin-right: 1px; }
.sub { position: relative; padding-left: 31px; }
.sub::before { content: ""; position: absolute; left: 31px; top: 0; bottom: 8px; border-left: 1px dotted #777; }
.nav .sub::after { content: ""; position: absolute; left: 12px; top: 0; bottom: 0; border-left: 1px dotted #777; }
.nav .sub.last::after { display: none; }
.sub li { height: 16px; display: flex; align-items: center; white-space: nowrap; }
.sub li::before { content: ""; flex: none; width: 11px; border-top: 1px dotted #777; margin-right: 1px; }
.nav .sub .i16 { margin-right: 4px; }
.hot { display: flex; background: #d9d9d9; }
.hot + .i16.i16 { margin-right: 0; }
.new { font: bold 9px/10px "Liberation Sans", sans-serif; background: #ffe000; margin: 0 0 6px 1px; }

.content { flex: 1; min-width: 0; display: flex; flex-direction: column; }
.compbar { height: 28px; flex: none; gap: 7px; }
.compbar .sep + label { margin-left: -5px; }
.combo { position: relative; display: flex; height: 22px; background: linear-gradient(90deg, #fff 83%, #f6f6f6 0); }
.combo select { appearance: none; width: 100%; padding-left: 2px; outline: 0; }
.combo .arr { position: absolute; right: 3px; top: 9px; pointer-events: none; }
.floor { width: 61px; margin: 0 -3px 0 -2px; }
.compbar .sep + button { margin-left: -2px; }
.up .i10, .dn .i10 { margin: 0 4px 0 2px; }
.up .i10 { color: #3467c8; transform: rotate(180deg); }
.dn .i10 { color: #bbb; }
.panes { flex: 1; min-height: 0; display: flex; gap: 5px; padding: 2px 4px 0 0; }
.complist { flex: 0 0 183px; display: flex; flex-direction: column; background: #fff; margin-bottom: 2px; }
.search { display: flex; align-items: center; height: 28px; padding: 3px 0 0 1px; }
.search input { width: 157px; height: 25px; border: 1px solid #707070; padding: 0 2px 4px; background: #fff; }
.search input::placeholder { color: #757575; }
.search button { width: 24px; justify-content: center; margin-left: auto; }
.search svg { width: 16px; height: 16px; }
.complist .treebox { padding-top: 2px; }
.complist .tree tt { padding-left: 7px; }
.complist .sub li.sel { background: linear-gradient(90deg, #fff 10px, #316ac5 10px); width: 72px; }

.props { flex: 1; min-width: 0; display: flex; flex-direction: column; background: #fff; margin-bottom: 4px; }
.tabs { display: flex; background: #f0f0f0; height: 21px; align-items: flex-end; border-bottom: 1px solid #dcdcdc; }
.tabs button { height: 20px; padding: 0 7px; border: 1px solid #dcdcdc; border-bottom: 0; }
.tabs .on { background: #fff; height: 21px; margin-bottom: -1px; }
.props .tabs { background: #fff; flex: none; }
.props .tabs .on { background: linear-gradient(#fafafa, #fff); padding: 0 7px 2px 6px; border-left: 0; }
.sheet { flex: 1; margin: 2px 1px 1px 3px; border: 1px solid #a0a0a0; overflow: hidden; }
table { width: 100%; border-collapse: collapse; table-layout: fixed; margin-top: 1px; }
th, td { height: 19px; padding: 0; border: 1px solid #c0c0c0; border-top: 0; font-weight: 400; line-height: 16px; }
th { height: 22px; background: linear-gradient(#fbfbfb, #efefef); }
.num { width: 22px; }
.name { width: 190px; }
td:first-child { text-align: center; background: #f7f7f7; font-size: 11px; border-left: 0; }
td:nth-child(2) { padding-left: 19px; white-space: nowrap; }
.cur td { background: #0078d7; color: #fff; }
.cur td:first-child { background: #fdd28c; color: #7a1a7a; }
.link td:nth-child(2) { color: #00f; }
.dim td:nth-child(2) { color: #808080; }
.grp td:nth-child(2) { padding-left: 2px; }
.grp button { width: 12px; height: 12px; margin: 0 5px 0 0; border: 1px solid #b0b0b0; color: #000; justify-content: center; vertical-align: middle; line-height: 10px; }

.dialog { position: absolute; z-index: 2; left: 567px; right: 22px; top: 53px; bottom: 4px; display: flex; flex-direction: column; padding: 0 7px 7px; background: linear-gradient(#9ab4d2, #b9d0ea 32px) no-repeat #b9d0ea; background-origin: border-box; border: 1px solid #333; box-shadow: inset -1px -1px #5cc8e4; }
.dialog h2 { height: 31px; padding-top: 11px; flex: none; }
.dbody { flex: 1; min-height: 0; display: flex; flex-direction: column; background: #f0f0f0; }
.dialog .tabs button { padding: 0 7px; }
.dialog .tabs .on { padding: 0 12px 0 7px; }
.dpanel { flex: 1; min-height: 0; display: flex; flex-direction: column; padding: 3px 3px 1px 5px; border-bottom: 1px solid #dcdcdc; box-shadow: inset 2px 0 #fff, inset -2px 0 #fff; }
.dpanel .bar { flex: none; align-self: flex-start; gap: 4px; padding: 0 5px; }
.dpanel .bar .lbl { margin-right: 2px; }
.dpanel .bar button { padding: 0 4px; height: 24px; }
.dpanel .bar .icon { padding: 0 3px; }
.dpanel .bar .checked { background: #dfebf6; border: 1px solid #0078d7; }
.dpanel .bar .checked.icon { padding: 0 2px; }
.dpanel .bar > * + button { margin-left: -3px; }
.dpanel .bar > .sep + button { margin-left: 0; }
.dpanel .bar > .sep + .icon { margin-left: -2px; }
.dpanel .bar > .sep + .checked { margin-left: 0; }
.arr.line { margin-left: 0; }
.rebar { width: 76px; }
.rebar + .sep { margin-left: -3px; }
.canvas { flex: 1; min-height: 0; margin-left: -1px; border: 2px solid #f00; background: #14171e; }
.canvas svg { width: 100%; height: 100%; }
.dims { fill: #fff; font-family: "DejaVu Sans", sans-serif; font-size: 10px; }
.dims .faint { fill: #3a3f48; }
.dims .grn { fill: #0f0; font-size: 8px; }
.snap { flex: none; display: flex; gap: 2px; height: 29px; padding-top: 1px; }
.snap .bar { padding: 0 4px 0 0; }
.dstatus { flex: none; display: flex; gap: 2px; height: 25px; padding-top: 3px; }
.dstatus span { border: 1px solid #d4d4d4; background: linear-gradient(#fcfcfc, #f0f0f0); padding: 2px 3px; display: flex; justify-content: space-between; white-space: nowrap; }
.dstatus .xy { width: 96px; }
.dstatus .grow { padding: 2px 2px 2px 1px; }
.dstatus svg { width: 12px; height: 12px; align-self: flex-end; }

.status { position: relative; flex: none; height: 21px; display: flex; gap: 2px; padding-top: 1px; background: #f4f4f4; }
.status > span { border: 1px solid #d4d4d4; background: linear-gradient(#fcfcfc, #f0f0f0); padding: 1px; white-space: nowrap; }
.s1 { width: 148px; }
.s2 { width: 78px; }
.s3 { width: 98px; }
.s4 { width: 48px; }
.ime { position: absolute; z-index: 3; right: 0; bottom: 0; width: 180px; height: 23px; display: flex; align-items: center; gap: 6px; padding: 0 4px 0 7px; background: #fff; border-top: 1px solid #bbb; }
.ime svg { width: 16px; height: 16px; }
.ime .logo { width: 28px; height: 28px; position: absolute; left: -27px; top: -4px; }
.ime b { font-size: 15px; line-height: 18px; color: #1d78d0; }

.taskbar { flex: none; height: 40px; display: flex; align-items: center; background: linear-gradient(90deg, #0b0d0e, #03161a 20%, #031317 80%, #0a0b0c); color: #fff; }
.t { width: 48px; height: 40px; justify-content: center; }
.tsearch { width: 150px; height: 30px; display: flex; align-items: center; gap: 7px; padding: 0 7px 0 3px; background: #3e3e3e; }
.tsearch input { flex: 1; min-width: 0; color: #a8a8a8; outline: 0; }
.apps { display: flex; gap: 1px; margin-left: 4px; }
.run { background: linear-gradient(#76b9ed, #76b9ed) center bottom / 40px 2px no-repeat; }
.act { background: linear-gradient(#76b9ed, #76b9ed) center bottom / 48px 2px no-repeat #3a4a4d; }
.tray { margin-left: auto; display: flex; align-items: center; gap: 8px; }
.tray time { width: 72px; text-align: center; line-height: 19px; margin: 0 3px 0 4px; }
.tray .i18 + span { margin-right: 4px; }
.peek { width: 5px; height: 40px; margin-left: 11px; border-left: 1px solid #555; }
```
